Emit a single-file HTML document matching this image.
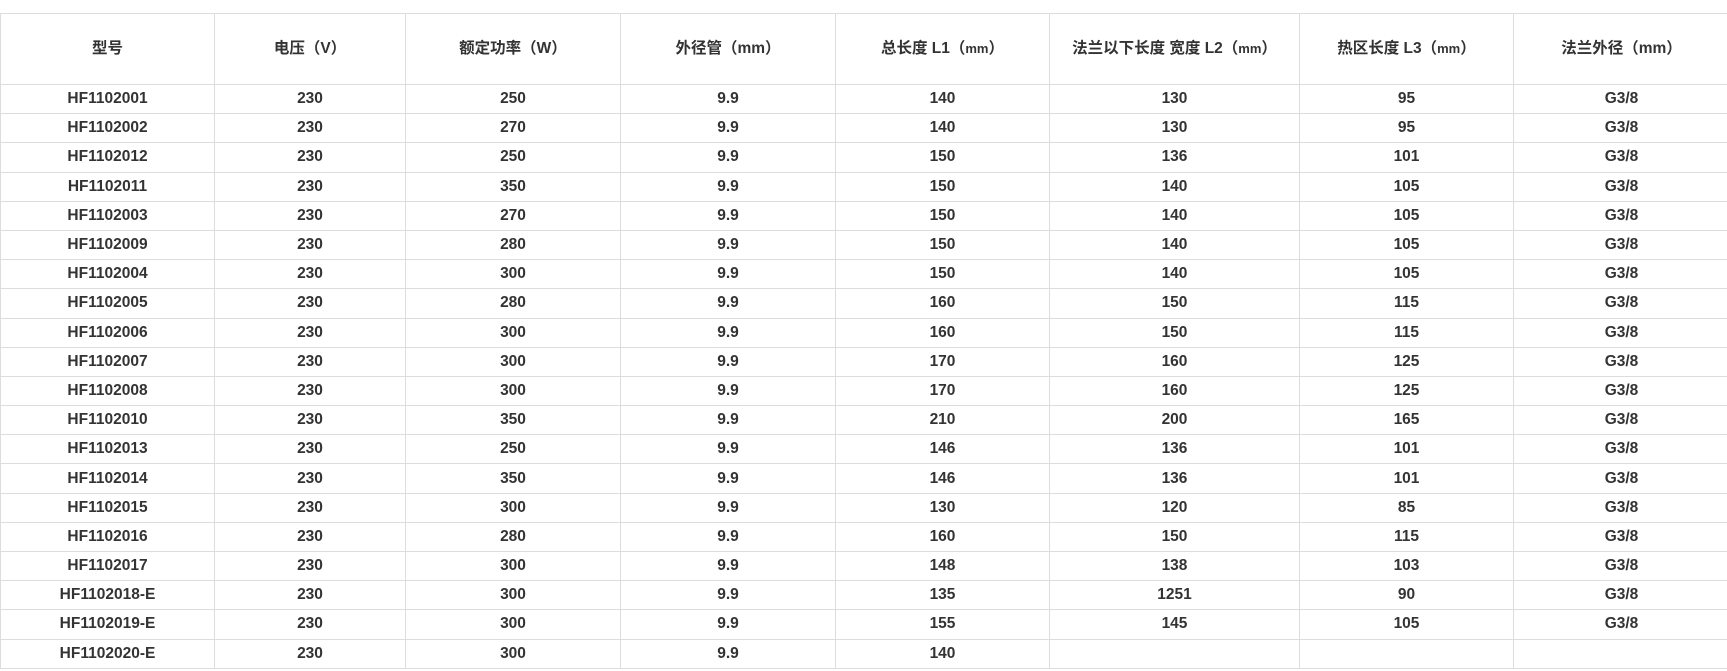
<!DOCTYPE html>
<html><head><meta charset="utf-8"><style>
body{margin:0;background:#fff;}
table{position:absolute;left:0;top:13px;border-collapse:collapse;table-layout:fixed;width:1729px;font-family:"Liberation Sans","Noto Sans CJK SC",sans-serif;font-weight:bold;font-size:15.5px;color:#333;}
td{border:1px solid #ddd;text-align:center;height:28.2px;padding:0;line-height:28px;}
tr.h td{height:70px;font-size:15.5px;}
</style></head><body>
<table>
<colgroup><col style="width:214px"><col style="width:191px"><col style="width:215px"><col style="width:215px"><col style="width:214px"><col style="width:250px"><col style="width:214px"><col style="width:216px"></colgroup>
<tr class="h"><td>型号</td><td>电压（V）</td><td>额定功率（W）</td><td>外径管（mm）</td><td>总长度 L1（<span style="font-size:13px">mm</span>）</td><td>法兰以下长度 宽度 L2（<span style="font-size:13px">mm</span>）</td><td>热区长度 L3（<span style="font-size:13px">mm</span>）</td><td>法兰外径（mm）</td></tr>
<tr><td>HF1102001</td><td>230</td><td>250</td><td>9.9</td><td>140</td><td>130</td><td>95</td><td>G3/8</td></tr>
<tr><td>HF1102002</td><td>230</td><td>270</td><td>9.9</td><td>140</td><td>130</td><td>95</td><td>G3/8</td></tr>
<tr><td>HF1102012</td><td>230</td><td>250</td><td>9.9</td><td>150</td><td>136</td><td>101</td><td>G3/8</td></tr>
<tr><td>HF1102011</td><td>230</td><td>350</td><td>9.9</td><td>150</td><td>140</td><td>105</td><td>G3/8</td></tr>
<tr><td>HF1102003</td><td>230</td><td>270</td><td>9.9</td><td>150</td><td>140</td><td>105</td><td>G3/8</td></tr>
<tr><td>HF1102009</td><td>230</td><td>280</td><td>9.9</td><td>150</td><td>140</td><td>105</td><td>G3/8</td></tr>
<tr><td>HF1102004</td><td>230</td><td>300</td><td>9.9</td><td>150</td><td>140</td><td>105</td><td>G3/8</td></tr>
<tr><td>HF1102005</td><td>230</td><td>280</td><td>9.9</td><td>160</td><td>150</td><td>115</td><td>G3/8</td></tr>
<tr><td>HF1102006</td><td>230</td><td>300</td><td>9.9</td><td>160</td><td>150</td><td>115</td><td>G3/8</td></tr>
<tr><td>HF1102007</td><td>230</td><td>300</td><td>9.9</td><td>170</td><td>160</td><td>125</td><td>G3/8</td></tr>
<tr><td>HF1102008</td><td>230</td><td>300</td><td>9.9</td><td>170</td><td>160</td><td>125</td><td>G3/8</td></tr>
<tr><td>HF1102010</td><td>230</td><td>350</td><td>9.9</td><td>210</td><td>200</td><td>165</td><td>G3/8</td></tr>
<tr><td>HF1102013</td><td>230</td><td>250</td><td>9.9</td><td>146</td><td>136</td><td>101</td><td>G3/8</td></tr>
<tr><td>HF1102014</td><td>230</td><td>350</td><td>9.9</td><td>146</td><td>136</td><td>101</td><td>G3/8</td></tr>
<tr><td>HF1102015</td><td>230</td><td>300</td><td>9.9</td><td>130</td><td>120</td><td>85</td><td>G3/8</td></tr>
<tr><td>HF1102016</td><td>230</td><td>280</td><td>9.9</td><td>160</td><td>150</td><td>115</td><td>G3/8</td></tr>
<tr><td>HF1102017</td><td>230</td><td>300</td><td>9.9</td><td>148</td><td>138</td><td>103</td><td>G3/8</td></tr>
<tr><td>HF1102018-E</td><td>230</td><td>300</td><td>9.9</td><td>135</td><td>1251</td><td>90</td><td>G3/8</td></tr>
<tr><td>HF1102019-E</td><td>230</td><td>300</td><td>9.9</td><td>155</td><td>145</td><td>105</td><td>G3/8</td></tr>
<tr><td>HF1102020-E</td><td>230</td><td>300</td><td>9.9</td><td>140</td><td></td><td></td><td></td></tr>
</table>
</body></html>
